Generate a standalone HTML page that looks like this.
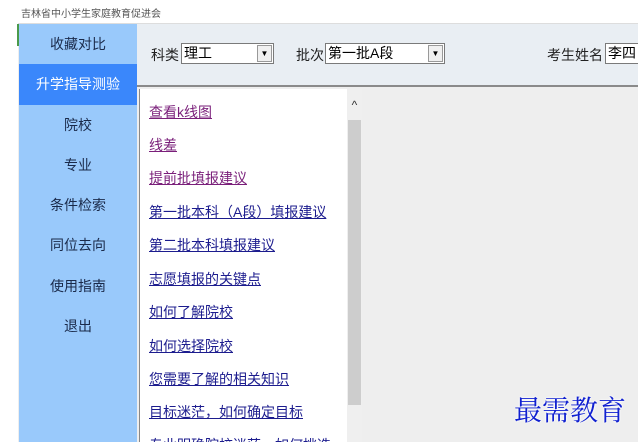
<!DOCTYPE html>
<html style="width:638px;height:442px;overflow:hidden"><head><meta charset="utf-8"><style>
*{margin:0;padding:0;box-sizing:border-box}
body{width:638px;height:442px;overflow:hidden;background:#eeeeee;position:relative;font-family:"Liberation Sans","Noto Sans CJK SC",sans-serif}
.title{position:absolute;left:18px;top:0;width:620px;height:24px;background:#fff;border-bottom:1px solid #ddd;font-size:10px;color:#555;padding:5px 0 0 3px}
.leftw{position:absolute;left:0;top:0;width:18px;height:442px;background:#fff}
.green{position:absolute;left:17px;top:24px;width:2px;height:22px;background:#4a9a4a}
.side{position:absolute;left:19px;top:24px;width:118px;height:418px;background:#99c9fb;overflow:hidden}
.side div{height:40.3px;line-height:40px;text-align:center;font-size:14px;color:#1a2a4a}
.side .act{background:#3a87fb;color:#fff}
.head{position:absolute;left:137px;top:24px;width:501px;height:63px;background:#e9eef3;border-bottom:2px solid #8a8a8a;overflow:hidden}
.lbl{position:absolute;font-size:14px;color:#222;top:21px}
.sel{position:absolute;top:19px;height:21px;background:#fff;border:1px solid #7a7a7a;font-size:14px;line-height:19px;padding-left:2px;color:#000}
.sel .ar{position:absolute;right:1px;top:1px;width:15px;height:17px;border:1px solid #999;background:#f0f0f0;font-size:8px;text-align:center;line-height:16px}
.panel{position:absolute;left:139px;top:89px;width:208px;height:353px;background:#fff;border-left:1px solid #888;overflow:hidden}
.panel a{position:absolute;left:9px;font-size:14px;text-decoration:underline;color:#1c1c8e;white-space:nowrap}
.panel a.v{color:#7a1f7a}
.sb{position:absolute;left:347px;top:89px;width:15px;height:353px;background:#efefef}
.thumb{position:absolute;left:348px;top:120px;width:13px;height:285px;background:#cdcdcd}
.wm{position:absolute;left:514px;top:392px;font-size:28px;line-height:34px;color:#1020d0;font-family:"Noto Serif CJK SC","AR PL UKai CN",serif;letter-spacing:0;text-shadow:0 0 2px #fff,0 0 2px #fff}
</style></head><body>
<div class="leftw"></div>
<div class="title">吉林省中小学生家庭教育促进会</div>
<div class="green"></div>
<div class="side">
<div>收藏对比</div><div class="act">升学指导测验</div><div>院校</div><div>专业</div><div>条件检索</div><div>同位去向</div><div>使用指南</div><div>退出</div>
</div>
<div class="head">
<span class="lbl" style="left:14px">科类</span>
<div class="sel" style="left:44px;width:93px">理工<span class="ar">▼</span></div>
<span class="lbl" style="left:159px">批次</span>
<div class="sel" style="left:188px;width:120px">第一批A段<span class="ar">▼</span></div>
<span class="lbl" style="left:410px">考生姓名</span>
<div class="sel" style="left:468px;width:40px;border-right:none">李四</div>
</div>
<div class="panel">
<a class="v" style="top:13px">查看k线图</a>
<a class="v" style="top:46px">线差</a>
<a class="v" style="top:79px">提前批填报建议</a>
<a style="top:113px">第一批本科（A段）填报建议</a>
<a style="top:146px">第二批本科填报建议</a>
<a style="top:180px">志愿填报的关键点</a>
<a style="top:213px">如何了解院校</a>
<a style="top:247px">如何选择院校</a>
<a style="top:280px">您需要了解的相关知识</a>
<a style="top:313px">目标迷茫，如何确定目标</a>
<a style="top:346px">专业明确院校迷茫，如何挑选</a>
</div>
<div class="sb"><div style="font-size:12px;color:#333;text-align:center;margin-top:9px">^</div></div>
<div class="thumb"></div>
<div class="wm">最需教育</div>
</body></html>
